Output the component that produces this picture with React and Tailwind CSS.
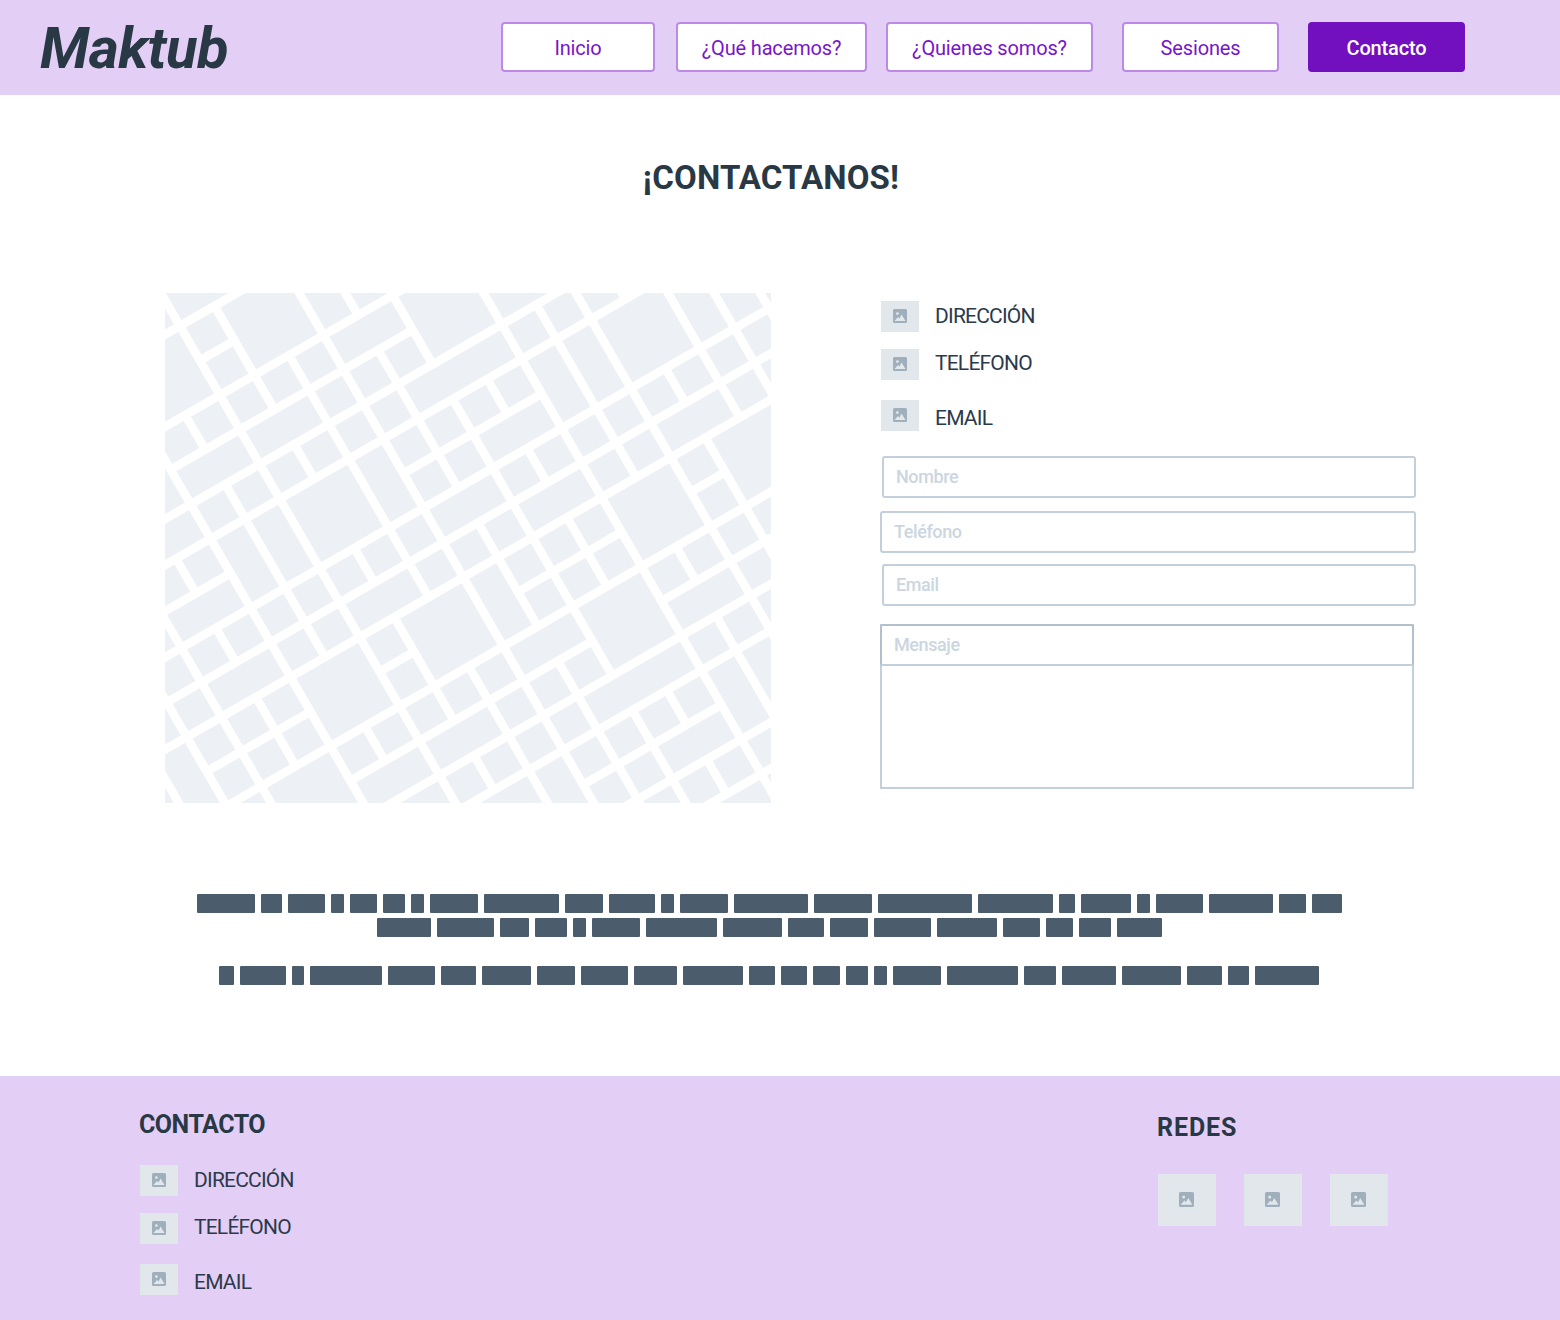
const FALLING = {
  '-9': [[-9, 20]], '-8': [[-9, 20]], '-7': [[-9, 20]],
  '-6': [[3, 4], [5, 6], [7, 9]],
  '-5': [[-9, 20]],
  '-4': [[0, 1], [2, 7], [9, 10]],
  '-3': [[-9, 20]],
  '-2': [[-2, 1], [2, 3], [5, 6], [7, 10], [11, 12]],
  '-1': [[0, 7], [9, 20]],
  0: [[-9, 20]],
  1: [[-9, 0], [1, 5], [6, 9], [10, 20]],
  2: [[-9, 2], [3, 11], [12, 20]],
  3: [[3, 4], [5, 6], [7, 9], [12, 13], [14, 15]],
  4: [[-9, 20]],
  5: [[2, 7], [9, 10], [11, 20]],
  6: [[-9, 20]],
  7: [[-9, 3], [5, 6], [7, 20]],
  8: [[-9, 7]],
  9: [[-9, 20]],
  10: [[-9, 20]],
};

const RISING = {
  '-2': [[-12, 14]], '-1': [[-3, -2]], 0: [[-12, 14]],
  1: [[-5, 2]], 2: [[-12, 14]], 3: [[-12, 14]],
  4: [[-12, -5], [0, 4]],
  5: [[-12, 14]], 6: [[-12, 14]], 7: [[-12, 14]],
  8: [[-8, -5], [-3, -2], [1, 4], [6, 7]],
  9: [[-12, 14]],
  10: [[-5, 2], [4, 14]],
  11: [[-12, 14]], 12: [[-12, 14]], 13: [[0, 4]], 14: [[-12, 14]], 15: [[-12, 14]],
};

// grid is 30deg rotated, c = x - .577y and d = y + .577x
const gridC = (m) => 130 + 46.1 * m;
const gridD = (k) => 522 + 46.1 * k;
function gridPoint(m, k) {
  const c = gridC(m);
  const y = (gridD(k) - 0.5774 * c) / 1.3333;
  return [c + 0.5774 * y - 165, y - 293];
}

const ROADS = [
  ...Object.entries(FALLING).flatMap(([m, spans]) => spans.map(([a, b]) => [gridPoint(+m, a), gridPoint(+m, b)])),
  ...Object.entries(RISING).flatMap(([k, spans]) => spans.map(([a, b]) => [gridPoint(a, +k), gridPoint(b, +k)])),
];

const TEXT_LINES = [
  [58, 21, 37, 13, 27, 22, 13, 48, 75, 38, 46, 13, 48, 74, 58, 94, 75, 16, 50, 13, 47, 64, 27, 30],
  [54, 57, 29, 32, 13, 48, 71, 59, 36, 38, 57, 60, 37, 27, 32, 45],
  [15, 46, 12, 72, 47, 35, 49, 38, 47, 43, 60, 26, 26, 27, 22, 13, 48, 71, 32, 54, 59, 35, 21, 64],
];

function PlaceholderIcon({ size = 14 }) {
  return (
    <svg width={size} height={size} viewBox="0 0 14 14">
      <rect width="14" height="14" rx="1.5" fill="#a0afbc" />
      <circle cx="4.4" cy="4.6" r="1.4" fill="#e1e7eb" />
      <path d="M1.5 12 L5 8 L6.5 9.5 L8.6 5.6 L12.5 12 Z" fill="#e1e7eb" />
    </svg>
  );
}

function ContactRow({ label, className, textClass }) {
  return (
    <div className={`flex items-start ${className}`}>
      <div className="w-[38px] h-[31px] pb-[2px] bg-[#e1e7eb] flex items-center justify-center shrink-0">
        <PlaceholderIcon />
      </div>
      <span className={`ml-[16px] text-[21px] leading-[30px] tracking-[-0.8px] text-[#2b3a4a] ${textClass}`}>{label}</span>
    </div>
  );
}

function NavButton({ label, className, active }) {
  return (
    <a
      className={`h-[50px] pt-[2px] flex items-center justify-center rounded-[4px] border-2 text-[20px] tracking-[-0.15px] ${
        active
          ? 'bg-[#720fbf] border-[#720fbf] text-white font-medium'
          : 'bg-white border-[#bc8ae6] text-[#7a14c9]'
      } ${className}`}
    >
      {label}
    </a>
  );
}

function Field({ placeholder, className }) {
  return (
    <input
      placeholder={placeholder}
      className={`block h-[42px] px-[12px] pb-[2px] border-2 border-[#c3cfda] rounded-[3px] bg-white text-[18px] font-medium tracking-[-0.4px] placeholder:text-[#cbd6e0] outline-none ${className}`}
    />
  );
}

export default function App() {
  return (
    <div className="w-[1560px] h-[1320px] bg-white font-['Roboto',sans-serif] overflow-hidden">
      {/* Header */}
      <header className="h-[95px] bg-[#e3cff5] flex items-center">
        <div className="ml-[40px] w-[461px] text-[58px] leading-none font-bold italic text-[#283845] tracking-[-0.6px]">Maktub</div>
        <nav className="flex -mt-[1px]">
          <NavButton label="Inicio" className="w-[154px]" />
          <NavButton label="¿Qué hacemos?" className="w-[191px] ml-[21px]" />
          <NavButton label="¿Quienes somos?" className="w-[207px] ml-[19px]" />
          <NavButton label="Sesiones" className="w-[157px] ml-[29px]" />
          <NavButton label="Contacto" className="w-[157px] ml-[29px]" active />
        </nav>
      </header>

      <h1 className="mt-[59px] w-[1542px] text-center text-[33px] leading-[47px] font-bold tracking-[0.15px] text-[#283845]">¡CONTACTANOS!</h1>

      {/* Map + form */}
      <section className="mt-[92px] pl-[165px] flex">
        <div className="w-[606px] h-[510px] bg-[#edf0f5] shrink-0">
          <svg width="606" height="510" viewBox="0 0 606 510">
            {ROADS.map(([a, b], i) => (
              <line key={i} x1={a[0]} y1={a[1]} x2={b[0]} y2={b[1]} stroke="#fff" strokeWidth="8.6" />
            ))}
          </svg>
        </div>
        <div className="ml-[109px] w-[536px] pt-[8px]">
          <ContactRow label="DIRECCIÓN" className="ml-[1px]" />
          <ContactRow label="TELÉFONO" className="ml-[1px] mt-[17px]" textClass="-mt-[1px]" />
          <ContactRow label="EMAIL" className="ml-[1px] mt-[20px]" textClass="mt-[3px]" />
          <Field placeholder="Nombre" className="ml-[2px] w-[534px] mt-[23px]" />
          <Field placeholder="Teléfono" className="w-[536px] mt-[13px]" />
          <Field placeholder="Email" className="ml-[2px] w-[534px] mt-[11px]" />
          <div className="mt-[18px] w-[534px] h-[165px] border-2 border-[#c3cfda] bg-white">
            <Field placeholder="Mensaje" className="-m-[2px] w-[534px] border-t-[#b2c0cc] border-x-[#b2c0cc]" />
          </div>
        </div>
      </section>

      {/* Redacted copy */}
      <section className="mt-[91px] w-[1539px]">
        {TEXT_LINES.map((words, i) => (
          <div key={i} className={`flex justify-center gap-[6px] h-[19px] ${i === 1 ? 'mt-[5px]' : ''} ${i === 2 ? 'mt-[29px] pr-[1px]' : ''}`}>
            {words.map((w, j) => (
              <span key={j} className="h-[19px] bg-[#4b5d6c] rounded-[1px]" style={{ width: w }} />
            ))}
          </div>
        ))}
      </section>

      {/* Footer */}
      <footer className="mt-[91px] h-[244px] bg-[#e3cff5] flex pl-[139px]">
        <div className="w-[1018px] pt-[31px]">
          <h3 className="text-[25px] leading-[36px] font-bold tracking-[-0.5px] text-[#283845]">CONTACTO</h3>
          <ContactRow label="DIRECCIÓN" className="ml-[1px] mt-[22px]" />
          <ContactRow label="TELÉFONO" className="ml-[1px] mt-[17px]" textClass="-mt-[1px]" />
          <ContactRow label="EMAIL" className="ml-[1px] mt-[20px]" textClass="mt-[3px]" />
        </div>
        <div className="pt-[34px]">
          <h3 className="text-[25px] leading-[36px] font-bold tracking-[0.9px] text-[#283845]">REDES</h3>
          <div className="flex gap-[28px] mt-[28px] ml-[1px]">
            {[0, 1, 2].map((i) => (
              <div key={i} className="w-[58px] h-[52px] pr-[1px] pb-[1px] bg-[#e1e7eb] flex items-center justify-center">
                <PlaceholderIcon size={15} />
              </div>
            ))}
          </div>
        </div>
      </footer>
    </div>
  );
}
